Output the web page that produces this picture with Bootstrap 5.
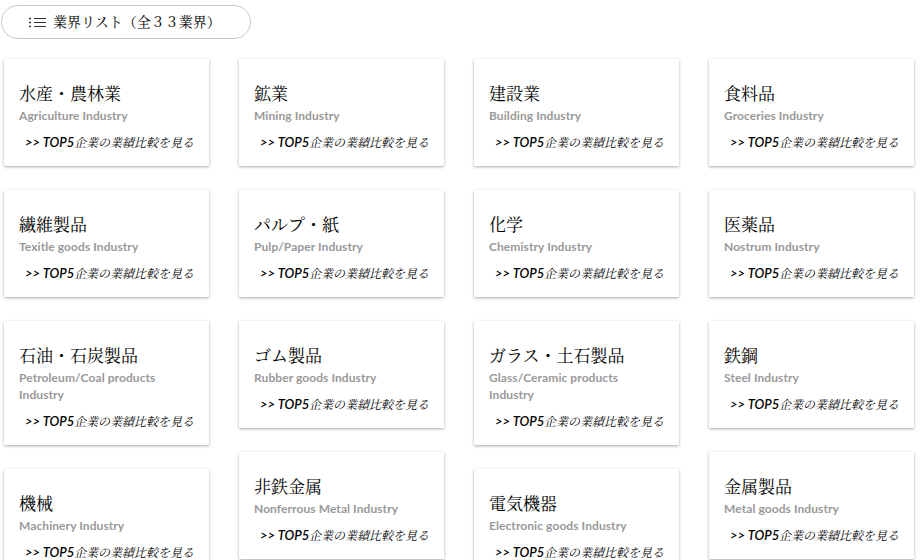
<!DOCTYPE html>
<html lang="ja">
<head>
<meta charset="utf-8">
<meta name="viewport" content="width=device-width, initial-scale=1">
<title>業界リスト</title>
<link href="https://cdn.jsdelivr.net/npm/bootstrap@5.3.0/dist/css/bootstrap.min.css" rel="stylesheet">
<style>
body{background:#fff;color:#000;height:560px;font-family:Lato,"Noto Serif CJK JP","Noto Sans CJK JP",sans-serif;font-weight:400}
.list-pill{width:250px;height:34px;margin:5px 0 0 1px;padding-left:27px;border:1px solid #c9c9c9!important;font-size:14px;line-height:20px;font-weight:400;font-family:"Noto Serif CJK JP","Noto Sans CJK JP",sans-serif}
.list-pill span{padding-bottom:2px}
.list-pill svg{margin-right:6px}
.industries{gap:30px;margin:20px 0 0 4px}
.industry-col{width:205px;gap:24px}
.industry{border:0;border-radius:1px;min-height:107px;padding:22px 12px 14px 15px;box-shadow:0 1px 3px rgba(0,0,0,.34)}
.industry h2{font-size:17px;line-height:24px;margin:0 0 2px;color:#000;font-weight:400;font-family:"Noto Serif CJK JP","Noto Sans CJK JP",sans-serif}
.industry p{font-size:12px;line-height:17px;margin:0;color:#999;font-weight:700;letter-spacing:.08px}
.industry a{color:#000;font-size:12px;line-height:18px;height:18px;margin-top:9px;margin-bottom:1px;padding-left:6px;font-style:italic;font-weight:400;white-space:nowrap}
.industry a .latin{display:inline-block;width:49px;font-size:13px;font-weight:600}
</style>
</head>
<body class="overflow-hidden">
<div class="list-pill rounded-pill d-flex align-items-center">
<svg width="18" height="12" viewBox="0 0 18 12" fill="none" stroke="#333"><path d="M5 2.5h12M5 6.5h12M5 10.5h12" stroke-width="1"/><path d="M0 2.5h2M0 6.5h2M0 10.5h2" stroke-width="1.6"/></svg>
<span>業界リスト（全３３業界）</span>
</div>
<main class="industries d-flex align-items-start">
<div class="industry-col d-flex flex-column">
<article class="card industry"><h2>水産・農林業</h2><p>Agriculture Industry</p><a class="text-decoration-none" href="#"><span class="latin">&gt;&gt; TOP5</span>企業の業績比較を見る</a></article>
<article class="card industry"><h2>繊維製品</h2><p>Texitle goods Industry</p><a class="text-decoration-none" href="#"><span class="latin">&gt;&gt; TOP5</span>企業の業績比較を見る</a></article>
<article class="card industry"><h2>石油・石炭製品</h2><p>Petroleum/Coal products<br>Industry</p><a class="text-decoration-none" href="#"><span class="latin">&gt;&gt; TOP5</span>企業の業績比較を見る</a></article>
<article class="card industry"><h2>機械</h2><p>Machinery Industry</p><a class="text-decoration-none" href="#"><span class="latin">&gt;&gt; TOP5</span>企業の業績比較を見る</a></article>
</div>
<div class="industry-col d-flex flex-column">
<article class="card industry"><h2>鉱業</h2><p>Mining Industry</p><a class="text-decoration-none" href="#"><span class="latin">&gt;&gt; TOP5</span>企業の業績比較を見る</a></article>
<article class="card industry"><h2>パルプ・紙</h2><p>Pulp/Paper Industry</p><a class="text-decoration-none" href="#"><span class="latin">&gt;&gt; TOP5</span>企業の業績比較を見る</a></article>
<article class="card industry"><h2>ゴム製品</h2><p>Rubber goods Industry</p><a class="text-decoration-none" href="#"><span class="latin">&gt;&gt; TOP5</span>企業の業績比較を見る</a></article>
<article class="card industry"><h2>非鉄金属</h2><p>Nonferrous Metal Industry</p><a class="text-decoration-none" href="#"><span class="latin">&gt;&gt; TOP5</span>企業の業績比較を見る</a></article>
</div>
<div class="industry-col d-flex flex-column">
<article class="card industry"><h2>建設業</h2><p>Building Industry</p><a class="text-decoration-none" href="#"><span class="latin">&gt;&gt; TOP5</span>企業の業績比較を見る</a></article>
<article class="card industry"><h2>化学</h2><p>Chemistry Industry</p><a class="text-decoration-none" href="#"><span class="latin">&gt;&gt; TOP5</span>企業の業績比較を見る</a></article>
<article class="card industry"><h2>ガラス・土石製品</h2><p>Glass/Ceramic products<br>Industry</p><a class="text-decoration-none" href="#"><span class="latin">&gt;&gt; TOP5</span>企業の業績比較を見る</a></article>
<article class="card industry"><h2>電気機器</h2><p>Electronic goods Industry</p><a class="text-decoration-none" href="#"><span class="latin">&gt;&gt; TOP5</span>企業の業績比較を見る</a></article>
</div>
<div class="industry-col d-flex flex-column">
<article class="card industry"><h2>食料品</h2><p>Groceries Industry</p><a class="text-decoration-none" href="#"><span class="latin">&gt;&gt; TOP5</span>企業の業績比較を見る</a></article>
<article class="card industry"><h2>医薬品</h2><p>Nostrum Industry</p><a class="text-decoration-none" href="#"><span class="latin">&gt;&gt; TOP5</span>企業の業績比較を見る</a></article>
<article class="card industry"><h2>鉄鋼</h2><p>Steel Industry</p><a class="text-decoration-none" href="#"><span class="latin">&gt;&gt; TOP5</span>企業の業績比較を見る</a></article>
<article class="card industry"><h2>金属製品</h2><p>Metal goods Industry</p><a class="text-decoration-none" href="#"><span class="latin">&gt;&gt; TOP5</span>企業の業績比較を見る</a></article>
</div>
</main>
<script src="https://cdn.jsdelivr.net/npm/bootstrap@5.3.0/dist/js/bootstrap.bundle.min.js"></script>
</body>
</html>
